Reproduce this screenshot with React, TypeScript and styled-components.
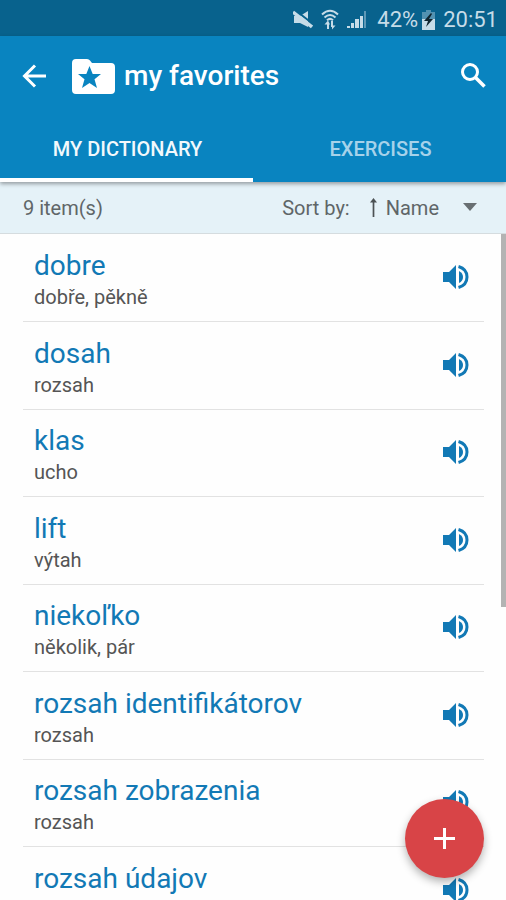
import React from "react";
import styled, { createGlobalStyle } from "styled-components";

const GlobalStyle = createGlobalStyle`
  * { box-sizing: border-box; }
  body { margin: 0; background: #fff; font-family: Roboto, "Noto Sans", sans-serif; }
  button { font: inherit; color: inherit; border: 0; padding: 0; background: none; cursor: pointer; }
  svg { display: block; flex: none; }
`;

const Screen = styled.div`
  display: flex;
  flex-direction: column;
  height: 100vh;
  overflow: hidden;
  background: #fefefe;
`;

const StatusBar = styled.div`
  display: flex;
  align-items: center;
  justify-content: flex-end;
  flex: none;
  height: 36px;
  padding: 3px 8px 0 0;
  background: #08628d;
  color: #c6dce8;
  font-size: 22px;
  line-height: 32px;
`;

const StatusIcons = styled.div`
  display: flex;
  align-items: center;
  gap: 8px;
  margin-right: 10px;
`;

const Battery = styled.div`
  margin: 0 8px 0 4px;
`;

const Header = styled.header`
  position: relative;
  z-index: 1;
  flex: none;
  background: #0984c0;
  color: #fff;
  box-shadow: 0 2px 4px rgba(0, 0, 0, 0.35);
`;

const Toolbar = styled.div`
  display: flex;
  align-items: center;
  height: 80px;
  padding: 0 20px 0 22px;
`;

const IconButton = styled.button`
  display: flex;
  flex: none;
`;

const Heading = styled.h1`
  display: flex;
  flex: 1;
  align-items: center;
  gap: 9px;
  margin: 0 0 0 24px;
  font-size: 28px;
  font-weight: 500;
  line-height: 32px;
`;

const Tabs = styled.div`
  display: grid;
  grid-template-columns: 1fr 1fr;
  height: 66px;
`;

const Tab = styled.button<{ $active?: boolean }>`
  && {
    padding: 4px 0 0 2px;
    border-bottom: 4px solid ${(p) => (p.$active ? "#fff" : "transparent")};
    color: ${(p) => (p.$active ? "#f2f9fc" : "#a6d2ea")};
    font-size: 20px;
    font-weight: 500;
    line-height: 24px;
  }
`;

const SortBar = styled.div`
  display: flex;
  align-items: center;
  justify-content: space-between;
  flex: none;
  height: 52px;
  padding: 1px 29px 0 23px;
  border-bottom: 1px solid #d5dcdf;
  background: #e5f2f8;
  color: #5f6668;
  font-size: 20px;
  line-height: 24px;
`;

const SortControl = styled.div`
  display: flex;
  align-items: center;
  gap: 19px;
`;

const SortButton = styled.button`
  display: flex;
  align-items: center;
`;

const SortName = styled.span`
  margin: 0 24px 0 8px;
`;

const ListArea = styled.main`
  position: relative;
  flex: 1;
  min-height: 0;
  overflow: hidden;
`;

const List = styled.ul`
  height: 100%;
  margin: 0;
  padding: 1px 22px 0 23px;
  overflow-y: auto;
  scrollbar-width: none;
  list-style: none;
`;

const Row = styled.li`
  display: flex;
  align-items: center;
  justify-content: space-between;
  height: 88px;
  padding: 0 14px 2px 11px;
  border-bottom: 1px solid #e2e2e2;

  &:nth-child(odd) {
    height: 87px;
  }
`;

const Entry = styled.div`
  padding-top: 6px;
`;

const Word = styled.div`
  color: #1279b5;
  font-size: 28px;
  line-height: 34px;
`;

const Meaning = styled.div`
  color: #555;
  font-size: 20px;
  line-height: 28px;
`;

const ScrollThumb = styled.div`
  position: absolute;
  top: 0;
  right: 0;
  width: 5px;
  height: 56%;
  background: #b3b3b3;
`;

const AddButton = styled.button`
  && {
    position: fixed;
    right: 22px;
    bottom: 22px;
    display: flex;
    align-items: center;
    justify-content: center;
    width: 79px;
    height: 79px;
    border-radius: 50%;
    background: #d84447;
    color: #fff;
    box-shadow: 0 4px 8px rgba(0, 0, 0, 0.3);
  }
`;

const MuteIcon = () => (
  <svg width="20" height="20" viewBox="0 0 20 20" fill="currentColor" aria-hidden="true">
    <path d="M1 6h6l8-5v16l-8-4H1z" />
    <path d="M2 0l18 14" stroke="#08628d" strokeWidth="2" />
    <path d="M0 2l19 15" stroke="currentColor" strokeWidth="3.500" />
  </svg>
);

const WifiIcon = () => (
  <svg width="18" height="21" viewBox="0 0 18 21" fill="none" stroke="currentColor" strokeWidth="2" aria-hidden="true">
    <path d="M1 5.500Q9-2 17 5.500M3.500 8.500Q9 3.500 14.500 8.500M6 11.200Q9 8.500 12 11.200" />
    <path d="M7 20v-6M11 12v6" strokeWidth="2" />
    <path d="M3.500 15.500L7 11.500V15.500zM14.500 16.500L11 20.500V16.500zM10 16.500h2zM7 11.500l2 4H7z" fill="currentColor" stroke="none" />
  </svg>
);

const SignalIcon = () => (
  <svg width="20" height="19" viewBox="0 0 20 19" fill="currentColor" aria-hidden="true">
    <path d="M0 16h3v2H0zM4 13h3v5H4zM8 9h4v9H8zM13 6h3v12h-3z" />
    <path d="M17 1h2v17h-2z" opacity=".45" />
  </svg>
);

const BatteryIcon = () => (
  <svg width="13" height="20" viewBox="0 0 13 20" fill="currentColor" aria-hidden="true">
    <path d="M4 0h5v2h4v8H0V2h4z" opacity=".4" />
    <path d="M0 9h13v11H0z" />
    <path d="M9 3L2 11h4l-2 6 7-8H7l3-5z" fill="#10252f" />
  </svg>
);

const BackIcon = () => (
  <svg width="26" height="26" viewBox="0 0 26 26" fill="none" stroke="currentColor" strokeWidth="3" aria-hidden="true">
    <path d="M24 13H4M13 2.500L2.500 13 13 23.500" />
  </svg>
);

const FolderIcon = () => (
  <svg width="43" height="35" viewBox="0 0 43 35" aria-hidden="true">
    <path d="M4 0h11q2 0 3 1.500l2 2.500h19q4 0 4 4v23q0 4-4 4H4q-4 0-4-4V4q0-4 4-4z" fill="#fff" />
    <path d="M17.500 7l3.200 8h8.300l-6.500 5.300 2.500 8.700-7.500-5-7.500 5 2.500-8.700L6 15h8.300z" fill="#0984c0" />
  </svg>
);

const SearchIcon = () => (
  <svg width="26" height="26" viewBox="0 0 26 26" fill="none" stroke="currentColor" strokeWidth="3" aria-hidden="true">
    <circle cx="10" cy="9" r="7.500" />
    <path d="M15 14l9.500 9.500" strokeWidth="3.500" />
  </svg>
);

const ArrowUpIcon = () => (
  <svg width="9" height="21" viewBox="0 0 9 21" aria-hidden="true">
    <path d="M4.500 0L8 4.500H1z" fill="#4c5254" />
    <path d="M4.500 3v16" stroke="#4c5254" strokeWidth="1.700" />
  </svg>
);

const CaretIcon = () => (
  <svg width="14" height="10" viewBox="0 0 14 10" aria-hidden="true">
    <path d="M0 0h14L7 8z" fill="#686f72" />
  </svg>
);

const SpeakerIcon = () => (
  <svg width="27" height="26" viewBox="0 0 27 26" fill="#1279b5" aria-hidden="true">
    <path d="M0 8h6l7-7v24l-7-7H0z" />
    <path d="M16 7q4 2 4 6t-4 6z" />
    <path d="M15.500 2.500Q24 5 24 13t-8.500 10.500" fill="none" stroke="#1279b5" strokeWidth="3" />
  </svg>
);

const PlusIcon = () => (
  <svg width="21" height="21" viewBox="0 0 21 21" fill="none" stroke="currentColor" strokeWidth="3" aria-hidden="true">
    <path d="M10.500 0v21M0 10.500h21" />
  </svg>
);

const entries = [
  { word: "dobre", meaning: "dobře, pěkně" },
  { word: "dosah", meaning: "rozsah" },
  { word: "klas", meaning: "ucho" },
  { word: "lift", meaning: "výtah" },
  { word: "niekoľko", meaning: "několik, pár" },
  { word: "rozsah identifikátorov", meaning: "rozsah" },
  { word: "rozsah zobrazenia", meaning: "rozsah" },
  { word: "rozsah údajov", meaning: "" },
];

export default function App() {
  return (
    <Screen>
      <GlobalStyle />
      <StatusBar>
        <StatusIcons>
          <MuteIcon />
          <WifiIcon />
          <SignalIcon />
        </StatusIcons>
        <span>42%</span>
        <Battery>
          <BatteryIcon />
        </Battery>
        <time>20:51</time>
      </StatusBar>
      <Header>
        <Toolbar>
          <IconButton aria-label="Back">
            <BackIcon />
          </IconButton>
          <Heading>
            <FolderIcon />
            my favorites
          </Heading>
          <IconButton aria-label="Search">
            <SearchIcon />
          </IconButton>
        </Toolbar>
        <Tabs role="tablist">
          <Tab role="tab" aria-selected="true" $active>
            MY DICTIONARY
          </Tab>
          <Tab role="tab" aria-selected="false">
            EXERCISES
          </Tab>
        </Tabs>
      </Header>
      <SortBar>
        <span>9 item(s)</span>
        <SortControl>
          <span id="sort-label">Sort by:</span>
          <SortButton aria-labelledby="sort-label sort-name" aria-haspopup="listbox">
            <ArrowUpIcon />
            <SortName id="sort-name">Name</SortName>
            <CaretIcon />
          </SortButton>
        </SortControl>
      </SortBar>
      <ListArea>
        <List>
          {entries.map((entry) => (
            <Row key={entry.word}>
              <Entry>
                <Word>{entry.word}</Word>
                <Meaning>{entry.meaning || "\u00a0"}</Meaning>
              </Entry>
              <IconButton aria-label={`Play ${entry.word}`}>
                <SpeakerIcon />
              </IconButton>
            </Row>
          ))}
        </List>
        <ScrollThumb />
      </ListArea>
      <AddButton aria-label="Add">
        <PlusIcon />
      </AddButton>
    </Screen>
  );
}
